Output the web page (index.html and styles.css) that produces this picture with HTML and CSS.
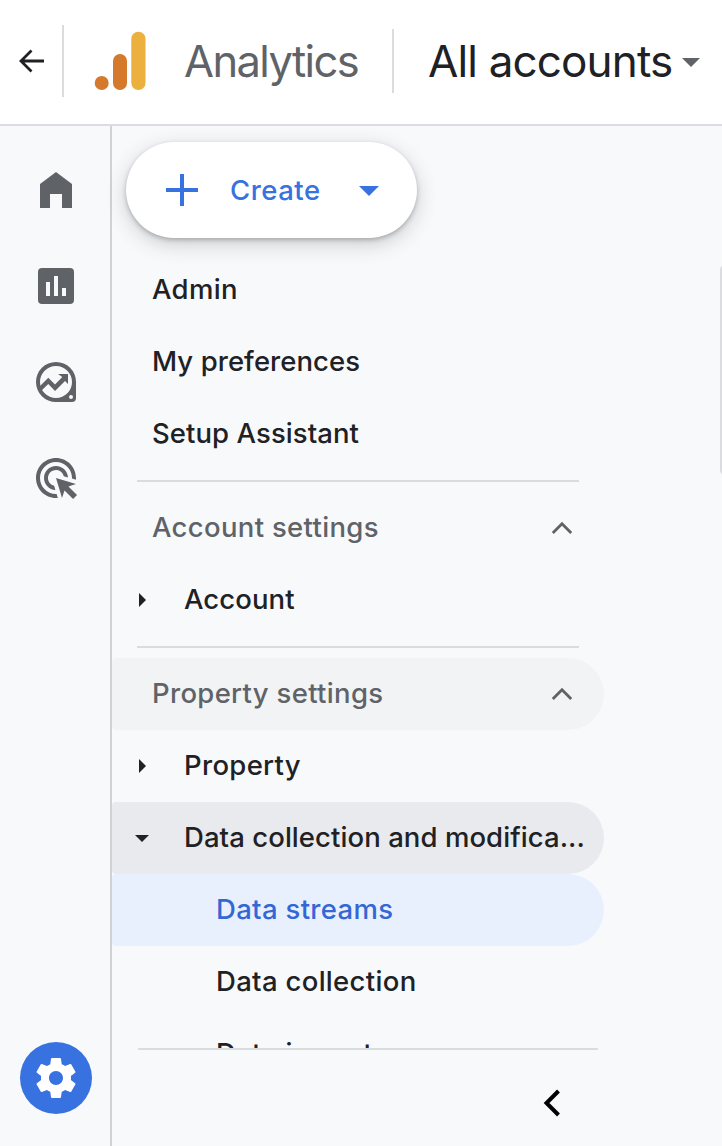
FILE: index.html
```html
<!DOCTYPE html>
<html lang="en">
<head>
<meta charset="utf-8">
<title>Analytics</title>
<link rel="stylesheet" href="styles.css">
</head>
<body>
<header class="header">
  <svg class="back" viewBox="0 0 28 28"><path d="M27 14H4M14.500 3.500L4 14l10.500 10.500"/></svg>
  <span class="rule"></span>
  <svg class="logo" viewBox="0 0 52 60">
    <circle cx="7.700" cy="52" r="7" fill="#d5792d"/>
    <rect x="19" y="23" width="14" height="36" rx="7" fill="#d5792d"/>
    <rect x="37.300" y=".7" width="14.200" height="58.300" rx="7" fill="#ecb03e"/>
  </svg>
  <span class="brand">Analytics</span>
  <span class="rule rule-short"></span>
  <span class="accounts">All accounts</span>
  <svg class="accounts-caret" viewBox="0 0 18 9"><path d="M0 0h18L9 9z"/></svg>
</header>
<div class="body">
  <nav class="rail">
    <svg class="rail-icon" viewBox="0 0 48 48"><path d="M24 6l16 12v24H30V28H18v14H8V18z"/></svg>
    <svg class="rail-icon" viewBox="0 0 48 48"><path fill-rule="evenodd" d="M10 6h28a4 4 0 0 1 4 4v28a4 4 0 0 1-4 4H10a4 4 0 0 1-4-4V10a4 4 0 0 1 4-4zM14 20v14h4V20zM22 14v20h4V14zM30 26v8h4v-8z"/></svg>
    <svg class="rail-icon" viewBox="0 0 48 48"><path fill-rule="evenodd" d="M24 4a20 20 0 0 1 20 20v16a4 4 0 0 1-4 4H24a20 20 0 0 1 0-40zM24 8a16 16 0 1 0 0 32a16 16 0 0 0 0-32zM39 37a2 2 0 1 0 0 4a2 2 0 0 0 0-4z"/><path d="M7 29l9.300-9.300 6.700 6.700 7.300-7.300L26 16h10v10l-3-3-10 10-6.700-7-7.300 7z"/></svg>
    <svg class="rail-icon" viewBox="0 0 24 24"><path d="M11.710 17.990C8.530 17.840 6 15.220 6 12c0-3.310 2.690-6 6-6 3.220 0 5.840 2.530 5.990 5.710l-2.100-.630C15.480 9.310 13.890 8 12 8c-2.210 0-4 1.790-4 4 0 1.890 1.310 3.480 3.080 3.890zM22 12c0 .3-.010.6-.040.9l-1.970-.590C20 12.210 20 12.100 20 12c0-4.420-3.580-8-8-8s-8 3.580-8 8 3.580 8 8 8c.1 0 .210 0 .310-.010l.590 1.970C12.600 21.990 12.300 22 12 22 6.480 22 2 17.520 2 12S6.480 2 12 2s10 4.480 10 10zM18.230 16.260L22 15l-10-3 3 10 1.260-3.770 4.270 4.270 1.980-1.980z"/></svg>
    <span class="settings"><svg viewBox="0 0 24 24"><path d="M19.430 12.980c.04-.32.07-.64.07-.98s-.03-.66-.07-.98l2.110-1.650c.19-.15.24-.42.12-.64l-2-3.460c-.12-.22-.39-.3-.61-.22l-2.490 1c-.52-.4-1.080-.73-1.690-.98l-.38-2.650C14.460 2.180 14.250 2 14 2h-4c-.25 0-.46.18-.49.42l-.38 2.650c-.61.25-1.170.59-1.690.98l-2.490-1c-.23-.09-.49 0-.61.22l-2 3.460c-.13.22-.07.49.12.64l2.110 1.650c-.04.32-.07.65-.07.98s.03.66.07.98l-2.110 1.650c-.19.15-.24.42-.12.64l2 3.460c.12.22.39.3.61.22l2.490-1c.52.4 1.080.73 1.690.98l.38 2.650c.03.24.24.42.49.42h4c.25 0 .46-.18.49-.42l.38-2.650c.61-.25 1.170-.59 1.690-.98l2.490 1c.23.09.49 0 .61-.22l2-3.460c.12-.22.07-.49-.12-.64l-2.110-1.650zM12 15.500c-1.930 0-3.500-1.570-3.500-3.500s1.570-3.500 3.500-3.500 3.500 1.570 3.500 3.500-1.570 3.500-3.500 3.500z"/></svg></span>
  </nav>
  <main class="panel">
    <div class="create">
      <svg class="plus" viewBox="0 0 32 32"><path d="M16 0v32M0 16h32"/></svg>
      <span class="create-label">Create</span>
      <svg class="create-caret" viewBox="0 0 20 10"><path d="M0 0h20L10 10z"/></svg>
    </div>
    <div class="menu">
      <div class="row"><span class="label spaced">Admin</span></div>
      <div class="row"><span class="label">My preferences</span></div>
      <div class="row"><span class="label">Setup Assistant</span></div>
      <div class="divider"></div>
      <div class="row section"><span class="label spaced">Account settings</span><svg class="chevron" viewBox="0 0 22 14"><path d="M1.800 12L11 2.800l9.200 9.200"/></svg></div>
      <div class="row branch"><svg class="arrow" viewBox="0 0 16 16"><path d="M5 1l7 7-7 7z"/></svg><span class="label">Account</span></div>
      <div class="divider"></div>
      <div class="row section hovered"><span class="label spaced">Property settings</span><svg class="chevron" viewBox="0 0 22 14"><path d="M1.800 12L11 2.800l9.200 9.200"/></svg></div>
      <div class="row branch"><svg class="arrow" viewBox="0 0 16 16"><path d="M5 1l7 7-7 7z"/></svg><span class="label spaced">Property</span></div>
      <div class="row branch open"><svg class="arrow" viewBox="0 0 16 16"><path d="M1 5h14l-7 7z"/></svg><span class="label">Data collection and modifica...</span></div>
      <div class="row leaf selected"><span class="label spaced">Data streams</span></div>
      <div class="row leaf"><span class="label spaced">Data collection</span></div>
      <div class="row leaf"><span class="label spaced">Data import</span></div>
    </div>
    <div class="footer"><svg class="collapse" viewBox="0 0 18 28"><path d="M15.500 2L3.500 14l12 12"/></svg></div>
    <span class="scrollbar"></span>
  </main>
</div>
</body>
</html>
```
FILE: styles.css
```css
* { box-sizing: border-box; }
body {
  margin: 0;
  width: 722px;
  height: 1146px;
  overflow: hidden;
  display: flex;
  flex-direction: column;
  background: #f8f9fb;
  color: #202124;
  font-family: Inter, "Liberation Sans", sans-serif;
  font-size: 27.500px;
  font-weight: 500;
  white-space: nowrap;
}
svg { display: block; flex: none; }
span { flex: none; }

.header {
  flex: none;
  display: flex;
  align-items: center;
  height: 126px;
  padding: 0 0 2px 17px;
  background: #fff;
  border-bottom: 2px solid #dadce0;
  font-size: 44px;
  font-weight: 400;
}
.back { width: 28px; height: 28px; fill: none; stroke: #202124; stroke-width: 2.800; }
.rule { width: 2px; height: 72px; margin-left: 17px; background: #dadce0; }
.logo { width: 52px; height: 60px; margin-left: 30px; }
.brand { width: 175px; margin-left: 38px; color: #5f6368; font-size: 43.500px; letter-spacing: -1.600px; }
.rule-short { height: 64px; margin-left: 33px; }
.accounts { width: 246px; margin-left: 34px; letter-spacing: -.85px; }
.brand, .accounts { padding-bottom: 1px; }
.accounts-caret { width: 18px; height: 9px; margin: 3px 0 0 8px; fill: #5f6368; }

.body { flex: 1; min-height: 0; display: flex; }
.rail {
  width: 112px;
  flex: none;
  display: flex;
  flex-direction: column;
  align-items: center;
  gap: 48px;
  padding: 40px 0 32px 2px;
  border-right: 2px solid #d0d2d4;
}
.rail-icon { width: 48px; height: 48px; fill: #5f6368; }
.settings {
  display: flex;
  align-items: center;
  justify-content: center;
  width: 72px;
  height: 72px;
  margin-top: auto;
  border-radius: 50%;
  background: #3871e0;
}
.settings svg { width: 48px; height: 48px; fill: #fff; }

.panel { position: relative; flex: 1; min-width: 0; display: flex; flex-direction: column; }
.create {
  flex: none;
  display: flex;
  align-items: center;
  width: 291px;
  height: 96px;
  margin: 16px 0 16px 14px;
  padding-left: 40px;
  border-radius: 48px;
  background: #fff;
  color: #3871e0;
  box-shadow: 0 2px 4px rgba(60,64,67,.3), 0 6px 20px rgba(60,64,67,.24);
}
.plus { width: 32px; height: 32px; fill: none; stroke: #3871e0; stroke-width: 4; }
.create-label { width: 90px; margin-left: 32px; letter-spacing: .5px; }
.create-caret { width: 20px; height: 10px; margin: 2px 0 0 39px; fill: #3871e0; }

.menu { height: 794px; flex: none; overflow: hidden; }
.row {
  display: flex;
  align-items: center;
  width: 492px;
  height: 72px;
  padding-left: 40px;
  border-radius: 4px 36px 36px 4px;
}
.label { padding-bottom: 2px; letter-spacing: .07px; }
.spaced { letter-spacing: .32px; }
.divider { width: 442px; height: 2px; margin: 10px 0 10px 25px; background: #dadce0; }
.section { justify-content: space-between; padding-right: 31px; color: #5f6368; }
.chevron { width: 22px; height: 14px; fill: none; stroke: #5f6368; stroke-width: 2.800; }
.branch { gap: 34px; padding-left: 22px; }
.arrow { width: 16px; height: 16px; fill: #202124; }
.leaf { padding-left: 104px; }
.hovered { background: #f1f3f4; }
.open { background: #e8eaed; }
.selected { background: #e8f0fe; color: #3367d6; }

.footer {
  flex: 1;
  width: 460px;
  margin-left: 26px;
  padding: 39px 0 0 404.500px;
  border-top: 2px solid #dadce0;
}
.collapse { width: 18px; height: 28px; fill: none; stroke: #000; stroke-width: 4; }
.scrollbar {
  position: absolute;
  top: 138px;
  right: -10px;
  width: 12px;
  height: 212px;
  border-radius: 6px;
  background: #dadce0;
}
```
